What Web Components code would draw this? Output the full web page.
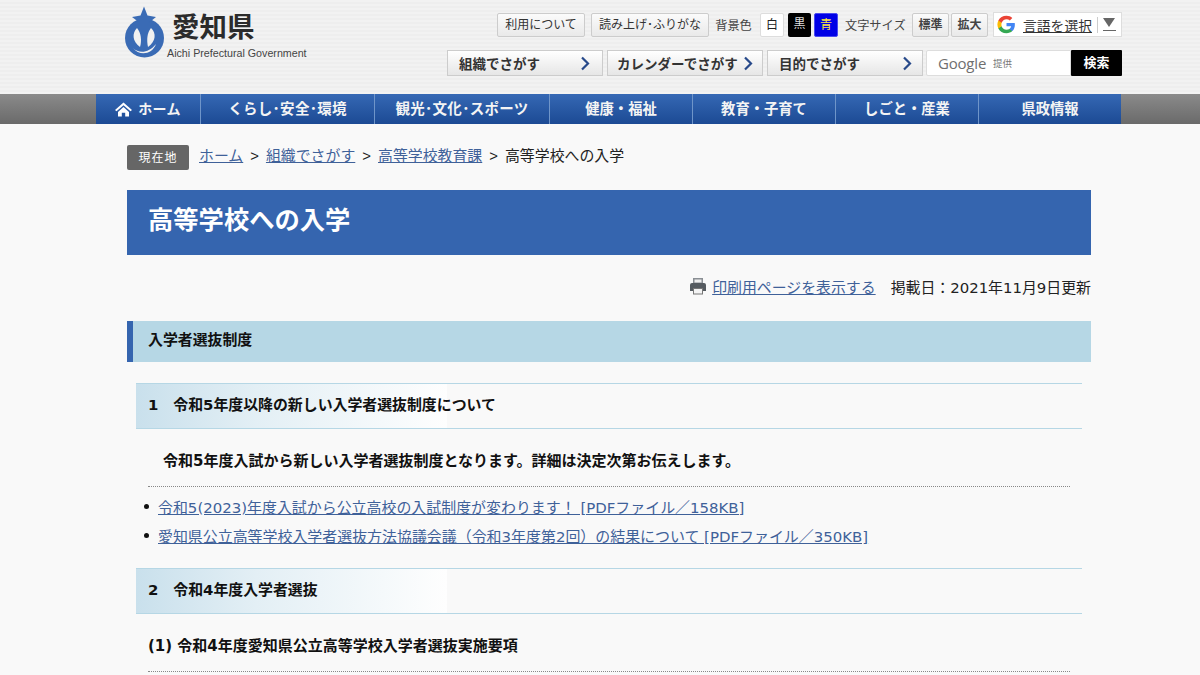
<!DOCTYPE html>
<html lang="ja">
<head>
<meta charset="utf-8">
<title>高等学校への入学</title>
<style>
  html, body { margin: 0; padding: 0; height: 675px; overflow: hidden; background: #f9f9f9; }
  body { font-family: "DejaVu Sans", "Noto Sans CJK JP", sans-serif; color: #222; }
</style>
</head>
<body>
<site-header></site-header>
<global-nav></global-nav>
<page-content>
  <bread-crumb></bread-crumb>
  <page-title>高等学校への入学</page-title>
  <page-meta></page-meta>
  <section-head>入学者選抜制度</section-head>
  <sub-head style="margin-top:21px">1　令和5年度以降の新しい入学者選抜制度について</sub-head>
  <note-text style="padding-left:36px">令和5年度入試から新しい入学者選抜制度となります。詳細は決定次第お伝えします。</note-text>
  <dotted-rule></dotted-rule>
  <link-list>
    <li-link>令和5(2023)年度入試から公立高校の入試制度が変わります！ [PDFファイル／158KB]</li-link>
    <li-link>愛知県公立高等学校入学者選抜方法協議会議（令和3年度第2回）の結果について [PDFファイル／350KB]</li-link>
  </link-list>
  <sub-head style="margin-top:18px">2　令和4年度入学者選抜</sub-head>
  <note-text style="padding-left:21px">(1) 令和4年度愛知県公立高等学校入学者選抜実施要項</note-text>
  <dotted-rule></dotted-rule>
</page-content>

<script>
const JP = '"Liberation Sans", "Noto Sans CJK JP", sans-serif';
const BODY = '"DejaVu Sans", "Noto Sans CJK JP", sans-serif';

class SiteHeader extends HTMLElement {
    constructor() {
        super();
        this.shadowDOM = this.attachShadow({ mode: "open" });
    }

    connectedCallback() {
        this.shadowDOM.innerHTML = `
        <style>
            :host {
                display: flex;
                justify-content: space-between;
                box-sizing: border-box;
                height: 94px;
                padding: 6px 78px 0 122px;
                background: repeating-linear-gradient(0deg, #f2f2f2 0, #f2f2f2 2px, #eeeeee 2px, #eeeeee 4px);
                font-family: ${JP};
            }
            .logo { display: flex; align-items: flex-start; height: 56px; }
            .logo svg { display: block; flex: none; }
            .logo-text { margin: 6px 0 0 3px; }
            .logo-jp { font-size: 27.500px; line-height: 32px; font-weight: bold; color: #2b2b2b; padding-left: 5px; }
            .logo-en { font-size: 10.700px; line-height: 13px; color: #444; margin-top: 3px; white-space: nowrap; }
            .tools { display: flex; flex-direction: column; align-items: flex-end; gap: 13px; padding-top: 6px; }
            .row { display: flex; align-items: center; }
            .btn {
                box-sizing: border-box; height: 24px; line-height: 22px;
                font-size: 12px; color: #333; text-align: center; white-space: nowrap;
                border: 1px solid #ccc; border-radius: 2px;
                background: linear-gradient(#fbfbfb, #e9e9e9);
            }
            .lbl { font-size: 12.200px; color: #444; white-space: nowrap; text-align: center; }
            .col { height: 24px; line-height: 22px; box-sizing: border-box; text-align: center; font-size: 12px; border-radius: 2px; }
            .translate {
                box-sizing: border-box; display: flex; align-items: center; width: 129px; height: 25px; margin-left: 5px;
                background: #fff; border: 1px solid #ddd; font-size: 13.800px; color: #333;
            }
            .translate svg { margin: 0 7px 0 3px; flex: none; }
            .translate u { white-space: nowrap; }
            .translate .sep { flex: none; width: 1px; height: 16px; background: #ccc; margin: 0 5px; }
            .arrow { flex: none; width: 13px; border-bottom: 1.500px solid #666; padding-bottom: 3px; }
            .tri { display: block; width: 0; height: 0; margin: 0 auto; border-left: 6.500px solid transparent; border-right: 6.500px solid transparent; border-top: 9px solid #666; }
            .finder {
                box-sizing: border-box; display: flex; align-items: center; justify-content: space-between;
                width: 156px; height: 26px; margin-right: 4px; padding: 0 12px 0 11px;
                font-size: 13.500px; font-weight: bold; color: #333; white-space: nowrap;
                border: 1px solid #ccc; background: linear-gradient(#fff, #e6e6e6);
            }
            .search { display: flex; height: 26px; }
            .search .box {
                box-sizing: border-box; width: 145px; background: #fff; border: 1px solid #ddd; border-radius: 2px 0 0 2px;
                padding-left: 11px; display: flex; align-items: center; color: #666;
            }
            .g-word { font-size: 15px; color: #6f6f6f; font-family: "Open Sans", sans-serif; letter-spacing: -0.2px; }
            .g-by { font-size: 9.500px; color: #777; margin-left: 7px; }
            .go { width: 51px; background: #000; color: #fff; font-size: 13px; font-weight: bold; line-height: 25px; text-align: center; border-radius: 1px; }
        </style>
        <div class="logo">
            <svg width="42" height="52" viewBox="0 0 42 52">
                <circle cx="22.500" cy="32" r="19.500" fill="#3a6bb5"/>
                <path fill="#3a6bb5" d="M22 0.500 L25.500 9.500 L34 11 L26.500 17 L18 17 L10 11 L18.500 9.500 Z"/>
                <path fill="#f1f1f1" d="M15 22 C10 27 10 35 18 41 C20 34 19 27 15 22 Z"/>
                <path fill="#f1f1f1" d="M29 22 C34.500 27 34 35 26 41 C24.500 34 25 27 29 22 Z"/>
                <path fill="#f1f1f1" d="M11 42 C17 48 27 47 34 38 C30 49 17 50 11 42 Z"/>
            </svg>
            <div class="logo-text">
                <div class="logo-jp">愛知県</div>
                <div class="logo-en">Aichi Prefectural Government</div>
            </div>
        </div>
        <div class="tools">
            <div class="row">
                <div class="btn" style="width:88px">利用について</div>
                <div class="btn" style="width:118px;margin-left:6px">読み上げ･ふりがな</div>
                <div class="lbl" style="width:37px;margin-left:6px">背景色</div>
                <div class="col" style="width:24px;margin-left:8px;background:#fff;color:#222;border:1px solid #ddd">白</div>
                <div class="col" style="width:23px;margin-left:4px;background:#000;color:#ddd">黒</div>
                <div class="col" style="width:24px;margin-left:3px;background:#0000e6;color:#ffe93b;border:1px solid #4a4af0">青</div>
                <div class="lbl" style="width:59px;margin-left:7px">文字サイズ</div>
                <div class="btn" style="width:37px;margin-left:8px;font-weight:bold;color:#444">標準</div>
                <div class="btn" style="width:37px;margin-left:2px;font-weight:bold;color:#444">拡大</div>
                <div class="translate">
                    <svg width="19" height="19" viewBox="0 0 48 48">
                        <path fill="#4285F4" d="M45.100 24.500c0-1.600-.1-3.100-.4-4.500H24v8.500h11.800c-.5 2.800-2.100 5.100-4.400 6.700v5.500h7.200c4.200-3.900 6.500-9.600 6.500-16.200z"/>
                        <path fill="#34A853" d="M24 46c6 0 11-2 14.600-5.300l-7.200-5.500c-2 1.300-4.500 2.100-7.400 2.100-5.700 0-10.500-3.900-12.200-9H3.400v5.700C7 41.100 14.900 46 24 46z"/>
                        <path fill="#FBBC05" d="M11.800 28.300c-.4-1.300-.7-2.800-.7-4.300s.3-3 .7-4.300V14H3.400C1.900 17 1 20.400 1 24s.9 7 2.400 10l8.400-5.700z"/>
                        <path fill="#EA4335" d="M24 10.700c3.200 0 6.100 1.100 8.400 3.300l6.300-6.300C34.900 4.200 29.900 2 24 2 14.900 2 7 6.900 3.400 14l8.400 5.700c1.700-5.100 6.500-9 12.200-9z"/>
                    </svg>
                    <u>言語を選択</u>
                    <span class="sep"></span>
                    <span class="arrow"><span class="tri"></span></span>
                </div>
            </div>
            <div class="row">
                <div class="finder">組織でさがす ${this.chevron()}</div>
                <div class="finder" style="padding:0 9px">カレンダーでさがす ${this.chevron()}</div>
                <div class="finder" style="margin-right:3px;padding-right:10px">目的でさがす ${this.chevron()}</div>
                <div class="search">
                    <div class="box"><span class="g-word">Google</span><span class="g-by">提供</span></div>
                    <div class="go">検索</div>
                </div>
            </div>
        </div>`;
    }

    chevron() {
        return `<svg width="10" height="15" viewBox="0 0 10 15" style="flex:none"><path d="M2 1.500 L8 7.500 L2 13.500" fill="none" stroke="#27498a" stroke-width="2.200"/></svg>`;
    }
}

class GlobalNav extends HTMLElement {
    constructor() {
        super();
        this.shadowDOM = this.attachShadow({ mode: "open" });
    }

    connectedCallback() {
        const items = [
            ["くらし･安全･環境", 174, "wide"],
            ["観光･文化･スポーツ", 175, "wide"],
            ["健康・福祉", 143, ""],
            ["教育・子育て", 143, ""],
            ["しごと・産業", 143, ""],
            ["県政情報", 143, ""]
        ];
        const links = items.map(i => `<a class="${i[2]}" style="width:${i[1]}px">${i[0]}</a>`).join("");
        this.shadowDOM.innerHTML = `
        <style>
            :host {
                display: block; height: 30px; padding: 0 79px 0 96px;
                background: linear-gradient(#8a8a8a, #6a6a6a);
                font-family: ${JP};
            }
            nav { display: flex; height: 30px; background: linear-gradient(#3568b4, #1c4a94); }
            a {
                box-sizing: border-box; display: block; flex: none; height: 30px; line-height: 30px;
                text-align: center; color: #f4f4f4; font-size: 14.300px; font-weight: bold; white-space: nowrap;
                border-left: 1px solid #6f95c9;
            }
            a.wide { font-size: 14.500px; letter-spacing: 0.3px; }
            a.home { width: 104px; border-left: 0; display: flex; align-items: center; justify-content: center; gap: 6px; font-size: 14px; letter-spacing: 0.3px; }
        </style>
        <nav>
            <a class="home">
                <svg width="17" height="15" viewBox="0 0 17 15"><path fill="#fff" d="M8.500 0.500 L17 8 L15.500 9.300 L8.500 3.200 L1.500 9.300 L0 8 Z M3 10 L8.500 5 L14 10 V14.500 H10.200 V10.800 H6.800 V14.500 H3 Z"/></svg>
                <span>ホーム</span>
            </a>${links}
        </nav>`;
    }
}

class PageContent extends HTMLElement {
    constructor() {
        super();
        this.attachShadow({ mode: "open" }).innerHTML = `
        <style>
            :host { display: block; box-sizing: border-box; width: 964px; margin-left: 127px; padding-top: 21px; font-family: ${BODY}; }
        </style>
        <slot></slot>`;
    }
}

class BreadCrumb extends HTMLElement {
    constructor() {
        super();
        this.attachShadow({ mode: "open" }).innerHTML = `
        <style>
            :host { display: flex; align-items: center; height: 25px; font-size: 14.900px; line-height: 20px; color: #222; }
            .here { box-sizing: border-box; width: 62px; height: 25px; line-height: 26px; margin-right: 10px; text-align: center; font-size: 12px; color: #fff; background: #666; border-radius: 2px; letter-spacing: 1px; }
            .trail { display: flex; margin-bottom: 4px; white-space: nowrap; }
            a { color: #3f6199; text-decoration: underline; }
            .gt { margin: 0 7px; font-family: "Liberation Sans", sans-serif; }
        </style>
        <span class="here">現在地</span>
        <div class="trail">
            <a>ホーム</a><span class="gt">&gt;</span>
            <a>組織でさがす</a><span class="gt">&gt;</span>
            <a>高等学校教育課</a><span class="gt">&gt;</span>
            <span>高等学校への入学</span>
        </div>`;
    }
}

class PageTitle extends HTMLElement {
    constructor() {
        super();
        this.attachShadow({ mode: "open" }).innerHTML = `
        <style>
            :host { display: block; box-sizing: border-box; height: 65px; margin-top: 20px; padding-left: 21px; line-height: 61px; font-size: 25.300px; font-weight: bold; color: #fff; background: #3565af; }
        </style>
        <slot></slot>`;
    }
}

class PageMeta extends HTMLElement {
    constructor() {
        super();
        this.attachShadow({ mode: "open" }).innerHTML = `
        <style>
            :host { display: flex; justify-content: flex-end; align-items: center; height: 22px; margin-top: 20px; font-size: 14.900px; color: #222; white-space: nowrap; }
            svg { margin-right: 5px; flex: none; }
            a { color: #3f6199; text-decoration: underline; margin-right: 15px; }
        </style>
        <svg width="18" height="18" viewBox="0 0 18 18">
            <path fill="#8a8f94" d="M4 1 H14 V6 H4 Z"/>
            <rect x="5.500" y="2.500" width="7" height="3" fill="#eee"/>
            <path fill="#555b60" d="M1 8 Q1 6 3 6 H15 Q17 6 17 8 V14 H14 V11 H4 V14 H1 Z"/>
            <rect x="4.500" y="11.500" width="9" height="5.500" fill="#f4f4f4" stroke="#777"/>
        </svg>
        <a>印刷用ページを表示する</a>
        <span>掲載日：2021年11月9日更新</span>`;
    }
}

class SectionHead extends HTMLElement {
    constructor() {
        super();
        this.attachShadow({ mode: "open" }).innerHTML = `
        <style>
            :host { display: block; box-sizing: border-box; height: 41px; margin-top: 24px; padding-left: 15px; line-height: 38px; font-size: 14.900px; font-weight: bold; color: #111; background: #b6d7e5; border-left: 6px solid #3565af; }
        </style>
        <slot></slot>`;
    }
}

class SubHead extends HTMLElement {
    constructor() {
        super();
        this.attachShadow({ mode: "open" }).innerHTML = `
        <style>
            :host { display: block; box-sizing: border-box; width: 946px; height: 46px; margin-left: 9px; padding-left: 12px; line-height: 42px; font-size: 14.900px; font-weight: bold; color: #111;
                border-top: 1px solid #b6d7e5; border-bottom: 1px solid #b6d7e5;
                background: linear-gradient(90deg, #c9e0ec 0, #e3eff5 120px, #fefefe 311px, #f9f9f9 311px); }
        </style>
        <slot></slot>`;
    }
}

class NoteText extends HTMLElement {
    constructor() {
        super();
        this.attachShadow({ mode: "open" }).innerHTML = `
        <style>
            :host { display: block; padding: 22px 0 15px; font-size: 15px; line-height: 20px; font-weight: bold; color: #111; white-space: nowrap; }
        </style>
        <slot></slot>`;
    }
}

class DottedRule extends HTMLElement {
    constructor() {
        super();
        this.attachShadow({ mode: "open" }).innerHTML = `
        <style>
            :host { display: block; width: 922px; margin-left: 21px; border-top: 1px dotted #888; }
        </style>`;
    }
}

class LinkList extends HTMLElement {
    constructor() {
        super();
        this.attachShadow({ mode: "open" }).innerHTML = `
        <style>
            :host { display: block; padding: 5px 0 0 17px; }
        </style>
        <slot></slot>`;
    }
}

class LiLink extends HTMLElement {
    constructor() {
        super();
        this.attachShadow({ mode: "open" }).innerHTML = `
        <style>
            :host { display: flex; align-items: center; height: 29px; font-size: 14.950px; white-space: nowrap; }
            i { flex: none; width: 5px; height: 5px; border-radius: 50%; background: #111; margin-right: 9px; }
            a { color: #3f6199; text-decoration: underline; }
        </style>
        <i></i><a><slot></slot></a>`;
    }
}

customElements.define("site-header", SiteHeader);
customElements.define("global-nav", GlobalNav);
customElements.define("page-content", PageContent);
customElements.define("bread-crumb", BreadCrumb);
customElements.define("page-title", PageTitle);
customElements.define("page-meta", PageMeta);
customElements.define("section-head", SectionHead);
customElements.define("sub-head", SubHead);
customElements.define("note-text", NoteText);
customElements.define("dotted-rule", DottedRule);
customElements.define("link-list", LinkList);
customElements.define("li-link", LiLink);
</script>
</body>
</html>
